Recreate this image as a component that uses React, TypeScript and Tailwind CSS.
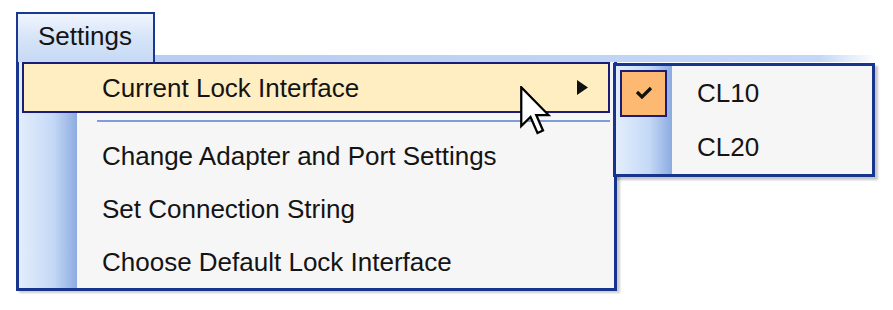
import React from "react";

const font = { fontFamily: '"Liberation Sans", Arial, sans-serif' };

const Arrow = () => (
  <svg width="11" height="15" viewBox="0 0 11 15">
    <polygon points="0,0 11,7.5 0,15" fill="#111" />
  </svg>
);

const Check = () => (
  <svg width="18" height="14" viewBox="0 0 18 14">
    <polyline points="2,6 7,11 16,2" fill="none" stroke="#111" strokeWidth="3.2" strokeLinejoin="miter" />
  </svg>
);

const Cursor = () => (
  <svg width="31" height="50" viewBox="0 0 12.4 20">
    <path d="M0.5,0.5 L0.5,16 L4.2,12.4 L7,18.8 L9.2,17.8 L6.5,11.6 L11.4,11.6 Z" fill="#fff" stroke="#000" strokeWidth="0.9" strokeLinejoin="miter" />
  </svg>
);

const Row = ({ children }: { children: React.ReactNode }) => (
  <div className="h-[53px] pl-[83px] flex items-center">{children}</div>
);

export default function App() {
  return (
    <div className="relative w-[893px] h-[310px] bg-white pt-[12px] text-[26px] text-[#141414] leading-[30px]" style={font}>
      <div className="flex items-end">
        <div className="ml-[16px] w-[139px] h-[50px] border-l-2 border-t-2 border-r-2 border-[#1a3792] bg-gradient-to-b from-[#f0f5fd] via-[#d6e4f8] to-[#c6d9f5] pl-[20px] pt-[7px]">
          Settings
        </div>
        <div className="w-[722px] h-[7px] bg-[linear-gradient(to_right,#b7cdf2,#c4d7f6_92%,#ffffff)]" />
      </div>

      <div className="ml-[16px] w-[601px] h-[229px] border-x-[3px] border-b-[3px] border-[#17358f] bg-[#f6f6f6] bg-[linear-gradient(to_right,#e3eefc,#c4d8f6_60%,#8cabe0)] bg-no-repeat bg-[length:58px_100%] shadow-[3px_2px_2px_rgba(0,0,0,0.2)] flex flex-col">
        <div className="ml-[3px] mr-[4px] h-[51px] border-2 border-[#1b1b78] bg-[#ffeec2] pl-[78px] pr-[20px] flex items-center justify-between">
          <span>Current Lock Interface</span>
          <Arrow />
        </div>
        <div className="h-[16px] pl-[78px] pr-[4px] flex items-center">
          <div className="w-full h-[2px] bg-[#7f9ed8]" />
        </div>
        <Row>Change Adapter and Port Settings</Row>
        <Row>Set Connection String</Row>
        <Row>Choose Default Lock Interface</Row>
      </div>

      <div className="absolute left-[613px] top-[63px] w-[262px] h-[114px] border-[3px] border-[#17358f] bg-[#f6f6f6] bg-[linear-gradient(to_right,#e3eefc,#c4d8f6_60%,#8cabe0)] bg-no-repeat bg-[length:56px_100%] shadow-[3px_3px_2px_rgba(0,0,0,0.22)] flex flex-col">
        <div className="h-[54px] flex items-center">
          <div className="ml-[4px] w-[47px] h-[47px] border-2 border-[#1b1b78] bg-[#fdb871] flex items-center justify-center">
            <Check />
          </div>
          <span className="ml-[30px]">CL10</span>
        </div>
        <div className="h-[54px] pl-[81px] flex items-center">CL20</div>
      </div>

      <div className="absolute left-[520px] top-[86px]">
        <Cursor />
      </div>
    </div>
  );
}
